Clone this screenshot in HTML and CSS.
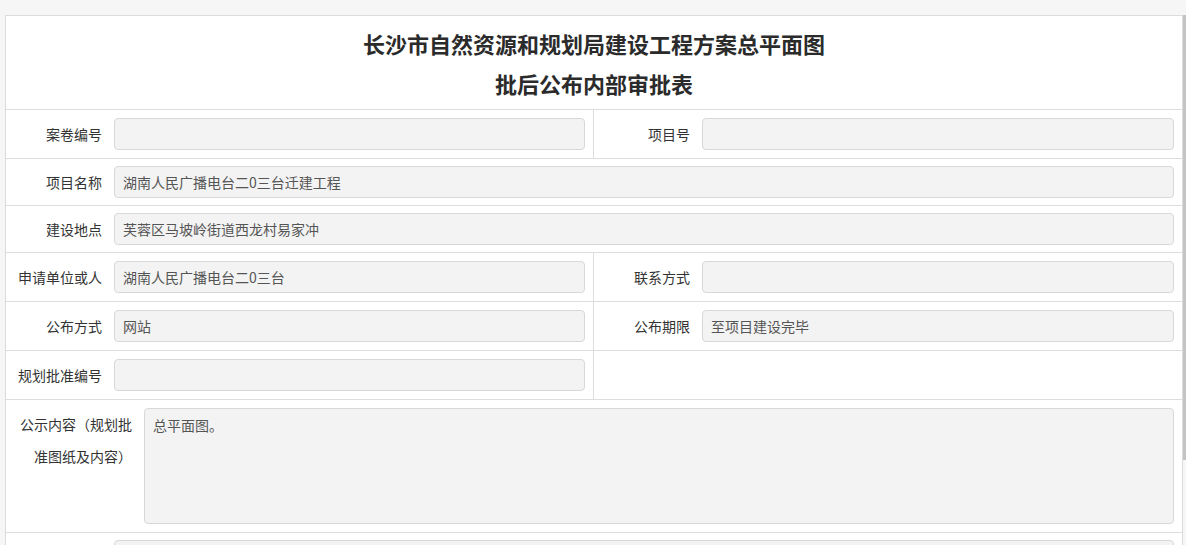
FILE: index.html
```html
<!DOCTYPE html>
<html lang="zh-CN">
<head>
<meta charset="utf-8">
<title>审批表</title>
<link rel="stylesheet" href="styles.css">
</head>
<body>
<div class="page">
  <div class="card">
    <div class="title">
      <div>长沙市自然资源和规划局建设工程方案总平面图</div>
      <div>批后公布内部审批表</div>
    </div>

    <div class="row two">
      <div class="field left">
        <div class="label">案卷编号</div>
        <div class="input"></div>
      </div>
      <div class="field">
        <div class="label">项目号</div>
        <div class="input"></div>
      </div>
    </div>

    <div class="row one">
      <div class="field">
        <div class="label">项目名称</div>
        <div class="input">湖南人民广播电台二0三台迁建工程</div>
      </div>
    </div>

    <div class="row one">
      <div class="field">
        <div class="label">建设地点</div>
        <div class="input">芙蓉区马坡岭街道西龙村易家冲</div>
      </div>
    </div>

    <div class="row two">
      <div class="field left">
        <div class="label">申请单位或人</div>
        <div class="input">湖南人民广播电台二0三台</div>
      </div>
      <div class="field">
        <div class="label">联系方式</div>
        <div class="input"></div>
      </div>
    </div>

    <div class="row two">
      <div class="field left">
        <div class="label">公布方式</div>
        <div class="input">网站</div>
      </div>
      <div class="field">
        <div class="label">公布期限</div>
        <div class="input">至项目建设完毕</div>
      </div>
    </div>

    <div class="row two">
      <div class="field left">
        <div class="label">规划批准编号</div>
        <div class="input"></div>
      </div>
      <div class="field"></div>
    </div>

    <div class="row area">
      <div class="field">
        <div class="label wide">公示内容（规划批准图纸及内容）</div>
        <div class="input textarea">总平面图。</div>
      </div>
    </div>

    <div class="row one">
      <div class="field">
        <div class="label"></div>
        <div class="input"></div>
      </div>
    </div>
  </div>
  <div class="scrollbar"></div>
</div>
</body>
</html>
```

FILE: styles.css
```css
html, body {
  margin: 0;
  padding: 0;
  height: 100%;
  overflow: hidden;
}

body {
  background: #f6f6f6;
  font-family: "Noto Sans CJK SC", "Noto Sans", sans-serif;
  font-size: 14px;
  color: #333;
  text-spacing-trim: space-all;
}

.page {
  position: relative;
  padding: 15px 0 0 5px;
  height: 100%;
  box-sizing: border-box;
}

.card {
  width: 1178px;
  box-sizing: border-box;
  background: #fff;
  border: 1px solid #dcdcdc;
}

.title {
  padding: 7px 0 6px;
  text-align: center;
  font-size: 22px;
  font-weight: bold;
  line-height: 40px;
  color: #2b2b2b;
}

.row {
  border-top: 1px solid #dddddd;
}

.row.two {
  display: grid;
  grid-template-columns: 588px 1fr;
}

.field {
  display: flex;
  align-items: center;
  padding: 8px 8px 8px 0;
}

.row.one .field {
  padding: 7px 8px 7px 0;
}

.field.left {
  border-right: 1px solid #dddddd;
}

.label {
  width: 108px;
  flex: none;
  box-sizing: border-box;
  padding-right: 12px;
  text-align: right;
  line-height: 20px;
  color: #333;
  white-space: nowrap;
}

.input {
  flex: 1;
  height: 32px;
  box-sizing: border-box;
  border: 1px solid #d8d8d8;
  border-radius: 4px;
  background: #f3f3f3;
  padding: 0 8px;
  line-height: 30px;
  color: #555;
  white-space: nowrap;
  overflow: hidden;
}

.row.area .field {
  align-items: flex-start;
}

.label.wide {
  width: 138px;
  padding-left: 13px;
  white-space: normal;
  line-height: 32px;
}

.input.textarea {
  height: 116px;
  padding: 6px 8px;
  line-height: 20px;
}

.scrollbar {
  position: absolute;
  top: 15px;
  right: 0;
  width: 3px;
  height: 445px;
  background: #c4c4c4;
}
```
